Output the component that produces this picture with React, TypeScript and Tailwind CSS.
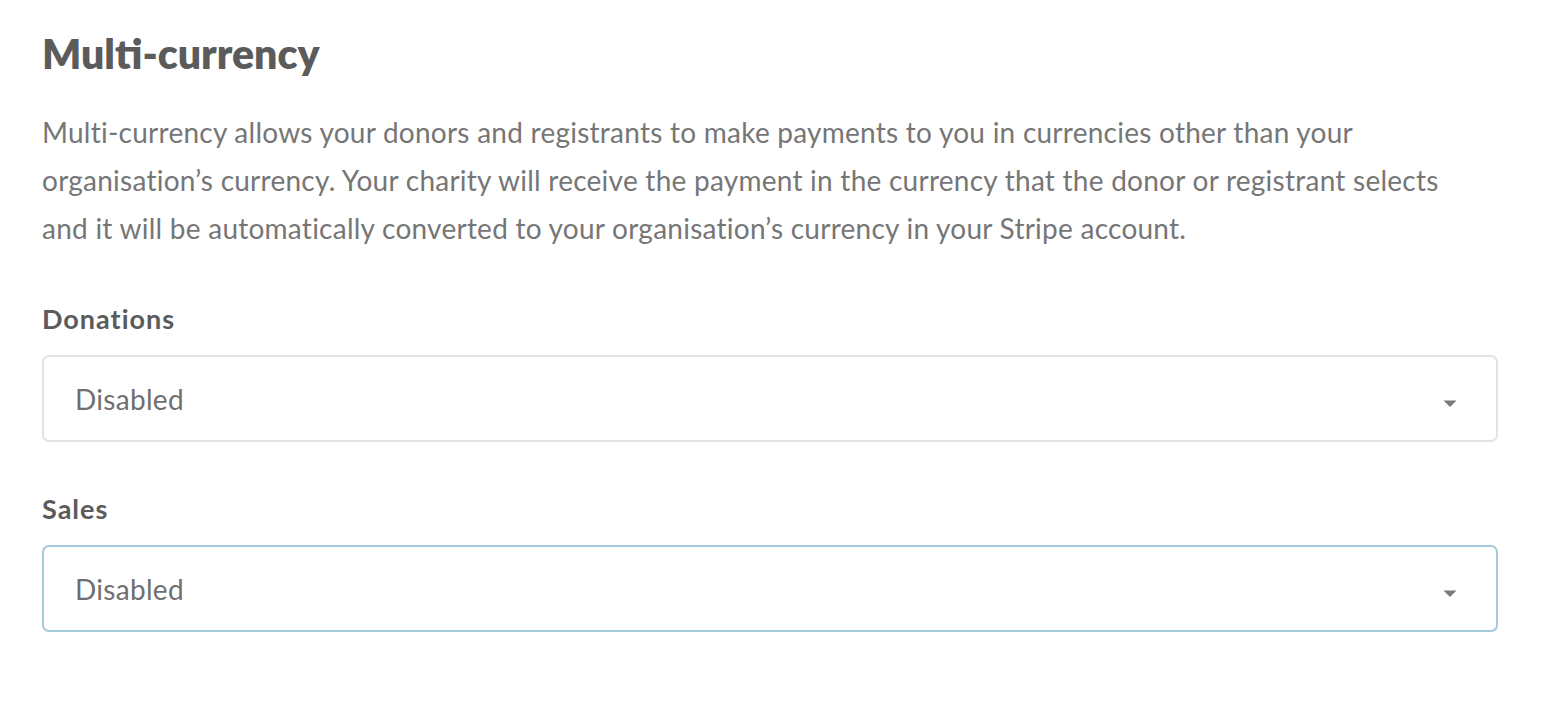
import React from "react";

const font = { fontFamily: "Lato, 'Noto Sans', sans-serif" };

function Caret() {
  return (
    <svg width="14" height="8" viewBox="0 0 14 8" className="shrink-0">
      <path d="M0.5 0.5 L13.5 0.5 L7 7 Z" fill="#7a7a7a" />
    </svg>
  );
}

function SelectBox({ value, focused }: { value: string; focused?: boolean }) {
  return (
    <div
      className={`flex h-[87px] items-center justify-between rounded-[7px] border-2 bg-white pl-[31px] pr-[39px] ${
        focused ? "border-[#a5cadb]" : "border-[#e2e2e2]"
      }`}
    >
      <span className="text-[28px] tracking-[0.3px] text-[#6f6f6f]">{value}</span>
      <span className="mt-[10px]">
        <Caret />
      </span>
    </div>
  );
}

export default function App() {
  return (
    <div className="min-h-[724px] bg-white" style={font}>
      <div className="pl-[42px] pr-[50px] pt-[28px]">
        <h2 className="text-[41px] font-extrabold leading-[52px] text-[#5b5b5b]">Multi-currency</h2>
        <p className="mt-[28px] text-[28px] leading-[48px] tracking-[0.25px] text-[#767676]">
          Multi-currency allows your donors and registrants to make payments to you in currencies other than your
          <br />
          organisation’s currency. Your charity will receive the payment in the currency that the donor or registrant selects
          <br />
          and it will be automatically converted to your organisation’s currency in your Stripe account.
        </p>
        <div className="mt-[51px]">
          <label className="block text-[27px] font-bold leading-[32px] tracking-[1px] text-[#5b5b5b]">Donations</label>
          <div className="mt-[20px]">
            <SelectBox value="Disabled" />
          </div>
        </div>
        <div className="mt-[51px]">
          <label className="block text-[27px] font-bold leading-[32px] tracking-[1px] text-[#5b5b5b]">Sales</label>
          <div className="mt-[20px]">
            <SelectBox value="Disabled" focused />
          </div>
        </div>
      </div>
    </div>
  );
}
